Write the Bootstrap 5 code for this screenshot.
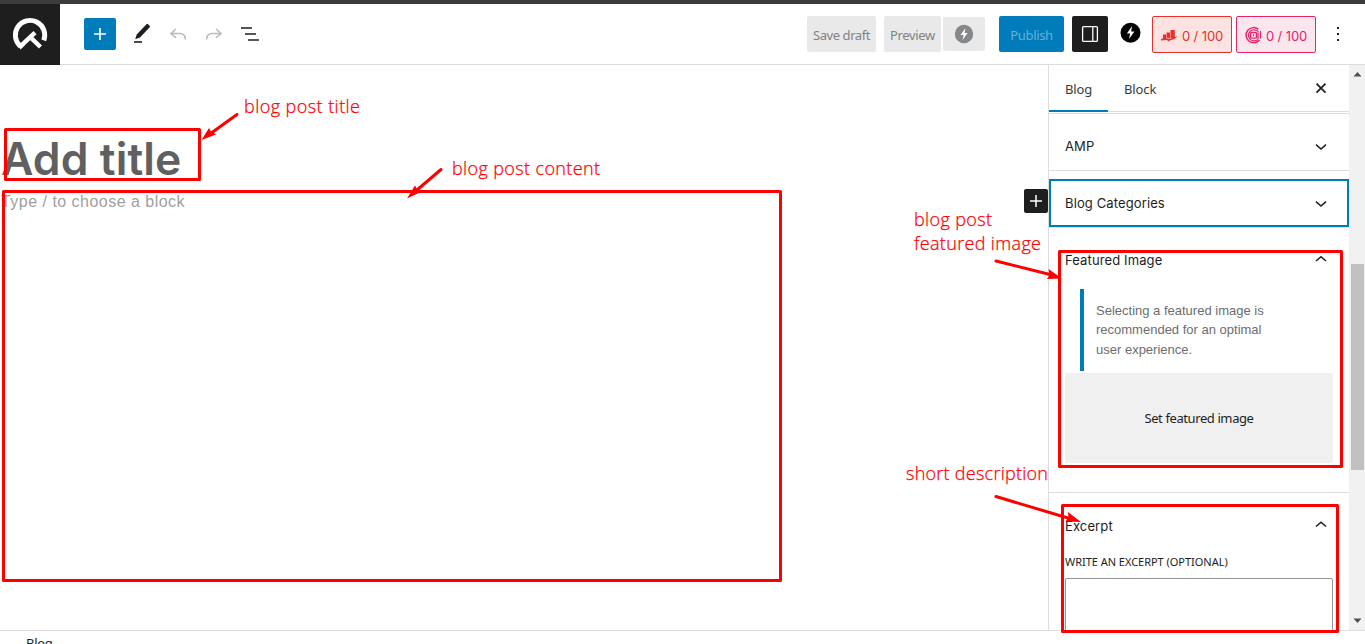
<!DOCTYPE html>
<html lang="en">
<head>
<meta charset="utf-8">
<meta name="viewport" content="width=device-width, initial-scale=1">
<title>Add title</title>
<link href="https://cdn.jsdelivr.net/npm/bootstrap@5.3.0/dist/css/bootstrap.min.css" rel="stylesheet">
<style>
:root{--wp-blue:#007cba;--ink:#1e1e1e;--line:#ddd}
body{height:644px;overflow:hidden;font:13px/20px "Noto Sans","Open Sans",sans-serif;color:var(--ink);background:#fff;position:relative}
svg{display:block;flex:none}
.top-strip{height:4px;background:#3c3c3c}
.editor-bar{height:61px;border-bottom:1px solid var(--line)}
.site-logo{width:60px;height:61px;background:var(--ink)}
.tools{padding:14px 0 0 24px}
.actions{padding-top:12px}
.tool{width:32px;height:32px;padding:0;border-radius:2px;border:0}
.tool-add{background:var(--wp-blue)}
.hbtn{height:36px;padding:2px 0 0;border:0;border-radius:2px;font-size:13px;line-height:20px;white-space:nowrap;background:#e9e9e9;color:#828282;font-family:"Noto Sans",sans-serif}
.save{width:69px;margin-right:8px;letter-spacing:-.42px}.preview{width:57px;margin-right:2px;letter-spacing:-.35px}
.amp{width:42px;height:34px;margin:1px 14px 0 0;padding:0}
.publish{width:65px;margin-right:8px;color:#66b0d6;background:var(--wp-blue);letter-spacing:-.35px}
.toggle{width:36px;background:var(--ink);margin-right:12px;padding:0}
.score{width:80px;height:37px;border:1px solid;border-radius:2px;font:400 13px/20px Inter,sans-serif;padding-top:3px;gap:4px;letter-spacing:-.1px}
.score svg{margin-top:-3px}
.score-seo{color:#e8302c;background:#fce3e1;margin:0 4px 0 11px}
.score-ai{color:#e6246c;background:#fce6ee}
.workspace{height:565px}
.post-title{margin:0 0 0 -1px;padding:68px 0 0 2px;font:600 44.5px/52px Inter,sans-serif;color:#606060;letter-spacing:.1px}
.placeholder-line{margin:6px 0 0 1px;font:16px/22px "Liberation Sans",Arial,sans-serif;color:#a0a0a0;letter-spacing:.48px}
.inserter{width:24px;height:24px;background:var(--ink);border-radius:2px;margin-top:124px}
.settings{width:301px;border-left:1px solid var(--line)}
.tabs{height:47px;border-bottom:1px solid var(--line)}
.tab-item{padding:14px 16px 0;color:#3c3c3c;height:47px;font-size:13px;letter-spacing:-.1px}
.tab-item.current{border-bottom:2px solid var(--wp-blue);width:59px}
.panel-h{font:400 13px/20px Inter,sans-serif;letter-spacing:.12px;height:48px;padding:0 18px 0 16px;margin:0}
.p-amp{margin-top:1px;border-top:1px solid var(--line);border-bottom:1px solid var(--line);height:58px}
.p-cat{margin-top:8px;border:2px solid var(--wp-blue);padding:0 16px 0 14px}
.p-feat{border-top:1px solid var(--line);border-bottom:1px solid var(--line);height:266px;padding-top:8px}
.notice{height:82px;border-left:4px solid var(--wp-blue);margin:5px 0 2px 31px;padding:11.5px 40px 0 12px;font:13px/19.5px "Liberation Sans",sans-serif;color:#6d6d6d}
.set-image{height:90px;width:268px;margin-left:16px;background:#f0f0f0;border:0;border-radius:2px;font:13px/20px "Noto Sans",sans-serif;letter-spacing:-.4px;color:var(--ink)}
.p-excerpt{padding-top:9px}
.excerpt-label{margin:2px 0 6px 16px;font-size:11px;line-height:20px;letter-spacing:-.03px}
.excerpt{width:268px;height:80px;margin-left:16px;border:1px solid #949494;border-radius:2px}
.scroller{width:16px;background:#f1f1f1;padding:7px 1px 7px 2px}
.thumb{width:13px;height:206px;background:#c1c1c1;margin-top:187px}
.crumbs{height:14px;border-top:1px solid var(--line);padding:2px 0 0 26px;overflow:hidden;letter-spacing:-.3px}
.notes{position:absolute;left:0;top:0;pointer-events:none}
.notes text{font:300 18px "Open Sans",sans-serif;font-stretch:88%;fill:#f00;stroke:#f00;stroke-width:.25px}
</style>
</head>
<body>
<div class="top-strip"></div>
<header class="editor-bar d-flex">
  <div class="site-logo">
    <svg width="60" height="61" fill="none" stroke="#fff"><path d="M20.500 42.300A14.700 14.700 0 1 1 43.800 36.300" stroke-width="4.900"/><path d="M19.800 42.800 35 28.700M30 32.800 40.500 43" stroke-width="4.400"/><path d="M17.200 40 20.500 45.500 25 41z" fill="#fff" stroke="none"/></svg>
  </div>
  <div class="tools d-flex">
    <button class="btn tool tool-add"><svg width="32" height="32" stroke="#fff" stroke-width="1.6"><path d="M16 10v12M10 16h12"/></svg></button>
    <svg width="150" height="32" fill="none">
      <path d="m20.700 16.500 9.800-10.300q.8-.7 1.600.1l1.500 1.400q.8.800.1 1.600L24 19.500l-4.800 1.800z" fill="#1e1e1e"/><path d="M18 24h8" stroke="#1e1e1e" stroke-width="1.600"/>
      <path d="m60 11-5 4.500 5 4.500M55 15.500h9q5.300 0 5.300 6" stroke="#bbb" stroke-width="1.600"/>
      <path d="m100 11 5 4.500-5 4.500M105 15.500h-9q-5.300 0-5.300 6" stroke="#bbb" stroke-width="1.600"/>
      <path d="M125 10h11M129 16h11M132 22h11" stroke="#1e1e1e" stroke-width="1.700"/>
    </svg>
  </div>
  <div class="actions d-flex align-items-start ms-auto">
    <button class="hbtn save">Save draft</button>
    <button class="hbtn preview">Preview</button>
    <button class="hbtn amp"><svg width="42" height="34"><circle cx="21" cy="17" r="9.200" fill="#84888b"/><path d="m22.500 11-5 7h3.100l-1 5 5-7h-3.100z" fill="#fff"/></svg></button>
    <button class="hbtn publish">Publish</button>
    <button class="hbtn toggle"><svg width="36" height="36" fill="none" stroke="#fff" stroke-width="1.300"><rect x="10.600" y="10.600" width="14.800" height="14.800" rx="1"/><path d="M20.800 10.600v14.800"/></svg></button>
    <svg width="21" height="36"><circle cx="10.500" cy="16.700" r="10"/><path d="m12.100 10-5.200 7.600h3.200l-1 5.500 5.300-7.700h-3.300z" fill="#fff"/></svg>
    <div class="score score-seo d-flex align-items-center justify-content-center">
      <svg width="17" height="14" fill="currentColor"><path d="M2 6.500h3v4H2zM5.500 4.500H9V10H5.500zM9.500 2h4.300v8H9.500z"/><path d="M0 11q4-2 7.500-.3 4-.2 9-2.700-3 4-7.500 4.200L8 13.500 6 12 0 12.500z"/></svg><span>0 / 100</span>
    </div>
    <div class="score score-ai d-flex align-items-center justify-content-center">
      <svg width="17" height="18" fill="none" stroke="currentColor"><path d="M13.500 3.300A7.600 7.600 0 1 0 14.500 14" stroke-width="1.400"/><path d="M13.500 6A5.600 5.600 0 1 0 13 13.300" stroke-width="1.200"/><rect x="5.500" y="6.500" width="6" height="5.600" rx="1" stroke-width="1.400"/><path d="M8.500 8.300v2M13 6.500v6.500M15.500 5v7.500" stroke-width="1.300"/></svg><span>0 / 100</span>
    </div>
    <svg width="49" height="36" fill="#1e1e1e"><path d="M21 11h2v2h-2zM21 17h2v2h-2zM21 23h2v2h-2z"/></svg>
  </div>
</header>
<div class="workspace d-flex overflow-hidden">
  <main class="flex-grow-1 d-flex">
    <div class="flex-grow-1">
      <h1 class="post-title">Add title</h1>
      <p class="placeholder-line">Type / to choose a block</p>
    </div>
    <div class="inserter"><svg width="24" height="24" stroke="#fff" stroke-width="1.500"><path d="M12 6v12M6 12h12"/></svg></div>
  </main>
  <aside class="settings flex-shrink-0">
    <div class="tabs d-flex">
      <div class="tab-item current">Blog</div><div class="tab-item">Block</div>
      <svg class="ms-auto" width="56" height="46" stroke="#1e1e1e" stroke-width="1.700"><path d="m23.500 18.700 9 9M32.500 18.700l-9 9"/></svg>
    </div>
    <div class="panel-h p-amp d-flex align-items-center justify-content-between pt-2"><span>AMP</span><svg width="20" height="16" fill="none" stroke="#1e1e1e" stroke-width="1.600"><path d="m5 6.700 5 4.300 5-4.300"/></svg></div>
    <div class="panel-h p-cat d-flex align-items-center justify-content-between"><span>Blog Categories</span><svg width="20" height="16" fill="none" stroke="#1e1e1e" stroke-width="1.600"><path d="m5 6.700 5 4.300 5-4.300"/></svg></div>
    <div class="p-feat">
      <div class="panel-h d-flex align-items-center justify-content-between"><span>Featured Image</span><svg width="20" height="16" fill="none" stroke="#1e1e1e" stroke-width="1.600"><path d="m5 9 5-4.300L15 9"/></svg></div>
      <div class="notice">Selecting a featured image is<br>recommended for an optimal<br>user experience.</div>
      <button class="set-image">Set featured image</button>
    </div>
    <div class="p-excerpt">
      <div class="panel-h d-flex align-items-center justify-content-between"><span>Excerpt</span><svg width="20" height="16" fill="none" stroke="#1e1e1e" stroke-width="1.600"><path d="m5 8.500 5-4.300 5 4.300"/></svg></div>
      <div class="excerpt-label">WRITE AN EXCERPT (OPTIONAL)</div>
      <div class="excerpt"></div>
    </div>
  </aside>
  <div class="scroller d-flex flex-column flex-shrink-0">
    <svg width="13" height="5" fill="#505050"><path d="M2.500 4.500 6.500 0l4 4.500z"/></svg>
    <div class="thumb"></div>
    <svg class="mt-auto" width="13" height="5" fill="#505050"><path d="M2.500.5 6.500 5l4-4.500z"/></svg>
  </div>
</div>
<footer class="crumbs">Blog</footer>

<!-- callouts drawn over the editor -->
<svg class="notes" width="1365" height="644" viewBox="0 0 1365 644">
  <g fill="none" stroke="#f00" stroke-width="3" stroke-linejoin="round" stroke-linecap="round">
    <path d="M5.500 129.500h194v50H5.500zM3.500 191.500h777v389H3.500zM1059.500 251.500h282v215h-282zM1062.500 505.500h275v126h-275z"/>
    <path d="M237 114.500 212 132.500M441 169.500 417 190M996 261 1050 274.500M996 496.500 1068 518"/>
  </g>
  <g fill="#f00"><path d="M201.500 140 209 128l2 3.500 5 3zM407 198.500l8-13 2 3.500 5 2.500zM1062 278.500l-15 .5 2.500-4-1-6zM1081 522l-15.500-.5 3-4-.5-5.500z"/></g>
  <text x="244" y="113" textLength="116">blog post title</text>
  <text x="452" y="175" textLength="148">blog post content</text>
  <text x="914" y="226" textLength="78">blog post</text>
  <text x="914" y="250" textLength="127">featured image</text>
  <text x="906" y="480" textLength="142">short description</text>
</svg>
<script src="https://cdn.jsdelivr.net/npm/bootstrap@5.3.0/dist/js/bootstrap.bundle.min.js"></script>
</body>
</html>
